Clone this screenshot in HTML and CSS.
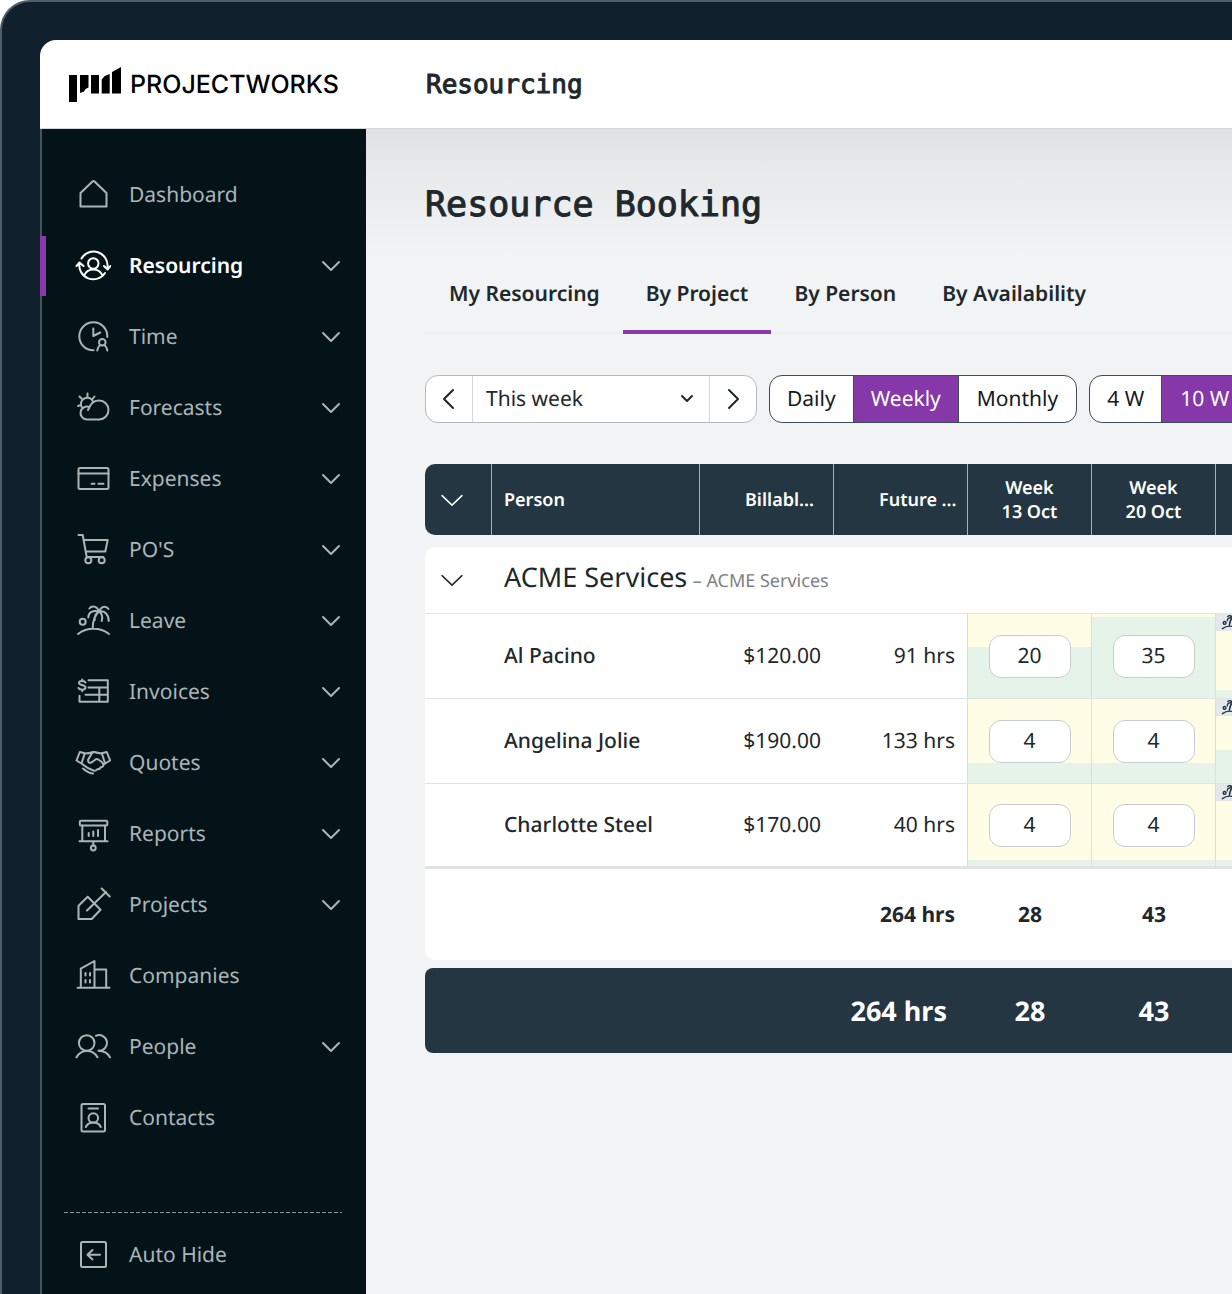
FILE: index.html
```html
<!DOCTYPE html>
<html lang="en">
<head>
  <meta charset="UTF-8">
  <meta name="viewport" content="width=device-width, initial-scale=1.0">
  <title>Resource Booking - Projectworks</title>
  <link rel="stylesheet" href="styles.css">
</head>
<body>
  <svg class="symbols" aria-hidden="true">
    <symbol id="chevron" viewBox="0 0 20 12">
      <path d="M2 2l8 8 8-8"/>
    </symbol>
    <symbol id="chevron-wide" viewBox="0 0 30 18">
      <path d="M1.500 3 15 16 28.500 3"/>
    </symbol>
    <symbol id="palm" viewBox="0 0 36 36">
      <circle cx="7.700" cy="18.800" r="3"/>
      <path d="M3 31c9-7 22-7 31 0M17.700 25c0-7 2-12.500 6.600-17M24.300 8.500C22 3 17 2 14.300 5.500M24.300 8.500C18 7 13.500 9 13.300 14.500M24.300 8.500C26 3 31 2.500 33.500 6M24.300 8.500c5.500-1 9.500 3 9.400 9.500M24.300 8.500c-4 2-5 5-4.500 8.500M24.300 8.500c3 2.500 3.500 6 2.400 9.500"/>
    </symbol>
  </svg>

  <div class="frame">
    <div class="app">
      <header class="topbar">
        <a class="logo" href="#">
          <svg class="logo-mark" viewBox="0 0 52 36" aria-hidden="true">
            <path d="M0 8h8v27H0zM11 8h8.500v12.500l-3 1.500-1.500 2.500-4 1.500zM22 8h8v18.500h-8zM32.700 12.500l3-3.500 5-2v19.500h-8zM43 5l9-5v26.500h-9z"/>
          </svg>
          <span>PROJECTWORKS</span>
        </a>
        <span class="section-name">Resourcing</span>
      </header>

      <div class="layout">
        <nav class="sidebar">
          <ul class="nav-list">
            <li><a class="nav-item" href="#">
              <svg class="icon" viewBox="0 0 36 36"><path d="M5.500 16 17.500 4.500q1-1 2 0L31.500 16v13.500h-26z"/></svg>
              <span>Dashboard</span></a></li>
            <li><a class="nav-item active" href="#">
              <svg class="icon" viewBox="0 0 36 36"><circle cx="18.300" cy="15.500" r="5.200"/><path d="M9.500 27c3-7.500 14.600-7.500 17.600 0M6.500 10.500A14 14 0 0 1 32.500 19M30 25A14 14 0 0 1 4.500 15M1.500 18l3-3.500 4 3.500M29 18l3.500 3.500 3-3.500"/></svg>
              <span>Resourcing</span>
              <svg class="chevron"><use href="#chevron"/></svg></a></li>
            <li><a class="nav-item" href="#">
              <svg class="icon" viewBox="0 0 36 36"><path d="M32.300 18A14 14 0 1 0 18.500 31.300M18.300 9.500v7.500l7-3.500M22.300 31.500q.5-4 3.200-5.500M32.300 31.500q-.5-4-3.200-5.500"/><circle cx="27.300" cy="23.200" r="3.300"/></svg>
              <span>Time</span>
              <svg class="chevron"><use href="#chevron"/></svg></a></li>
            <li><a class="nav-item" href="#">
              <svg class="icon" viewBox="0 0 36 36"><path d="M12 29.500a6.500 6.500 0 1 1 2.500-12.500c2-4.500 5.500-6.500 9.500-6.500a9.500 9.500 0 0 1 0 19zM7 17.500a6.300 6.300 0 1 1 11.200-5.500M12.500 7V3.500M7 9 4.500 6.500M6 15l-3 1M17.500 9l2-2.500M14.500 17l-1.500 3"/></svg>
              <span>Forecasts</span>
              <svg class="chevron"><use href="#chevron"/></svg></a></li>
            <li><a class="nav-item" href="#">
              <svg class="icon" viewBox="0 0 36 36"><rect x="3.500" y="7" width="30" height="21" rx="1.500"/><path d="M3.500 12.500h30M16.500 22.700h3M23.500 22.700h5"/></svg>
              <span>Expenses</span>
              <svg class="chevron"><use href="#chevron"/></svg></a></li>
            <li><a class="nav-item" href="#">
              <svg class="icon" viewBox="0 0 36 36"><path d="M3.500 3h4.200l4 22h16.500M8.700 8h24l-2.400 11.500H10.800"/><circle cx="13.300" cy="28.300" r="3"/><circle cx="26.700" cy="28.300" r="3"/></svg>
              <span>PO'S</span>
              <svg class="chevron"><use href="#chevron"/></svg></a></li>
            <li><a class="nav-item" href="#">
              <svg class="icon"><use href="#palm"/></svg>
              <span>Leave</span>
              <svg class="chevron"><use href="#chevron"/></svg></a></li>
            <li><a class="nav-item" href="#">
              <svg class="icon" viewBox="0 0 36 36"><path d="M13.500 6.300H32.800v21.500H4.500v-6M13.500 13.500h19M10.500 20.800h22.300M24.300 13.500v14.300M10.500 8.500c-1-2-6.500-2-6.500.5s6.500 1.500 6.500 4.500-6 2.500-7 .5M7.200 5.500v1.500M7.200 15.700v1.500"/></svg>
              <span>Invoices</span>
              <svg class="chevron"><use href="#chevron"/></svg></a></li>
            <li><a class="nav-item" href="#">
              <svg class="icon" viewBox="0 0 36 36"><path d="M4.800 7 9.800 8.300 6.500 18.500 1.500 15.500zM31.800 7 26.800 8.300l3.300 10.200 5-3zM9.800 8.500q4 0 8.500-1.500M27 8.500q-4.500-.5-7.500-1.500-1.500 0-2.500 1l-4 7q0 3.500 3.500 2.500l3.300-2.500q1.500-1.500 3.500-.5 3.500 2 5 4.500M6.500 18.500c3.500 3 7 5.500 12 7 2 .5 3 0 3.800-1.200 2 0 3-.8 3.200-2 2 0 3-1.300 2.800-2.500M30.200 18.500l-2 1.300M8 23.500q4.500 4.300 10 5"/></svg>
              <span>Quotes</span>
              <svg class="chevron"><use href="#chevron"/></svg></a></li>
            <li><a class="nav-item" href="#">
              <svg class="icon" viewBox="0 0 36 36"><rect x="4.800" y="4.800" width="27.500" height="4.700" rx="1"/><path d="M7.300 9.500v15.700M30 9.500v15.700M4.500 25.200h28M13.700 17v3M18.300 15.500v4.500M23 14v6M18.300 25.200v4.300"/><circle cx="18.300" cy="32" r="2.400"/></svg>
              <span>Reports</span>
              <svg class="chevron"><use href="#chevron"/></svg></a></li>
            <li><a class="nav-item" href="#">
              <svg class="icon" viewBox="0 0 36 36"><path d="M26.700 1.500l8 8M31 5 12 23.500M3.500 32V18.700l9.200-8.900L25.500 22.700 16.700 32z"/></svg>
              <span>Projects</span>
              <svg class="chevron"><use href="#chevron"/></svg></a></li>
            <li><a class="nav-item" href="#">
              <svg class="icon" viewBox="0 0 36 36"><path d="M2.500 29.700h32M5.800 29.700v-19L19.500 3v26.700M19.500 11.500h11.700v18.200M10.500 15v2.500M15 15v2.500M10.500 22v2.500M15 22v2.500"/></svg>
              <span>Companies</span></a></li>
            <li><a class="nav-item" href="#">
              <svg class="icon" viewBox="0 0 36 36"><circle cx="11.700" cy="14" r="7.800"/><path d="M1.500 28.300c4.500-8.500 16.500-8.500 21 0M21 6.800a7.800 7.800 0 1 1 2.500 14.900q8 0 11.500 6.600"/></svg>
              <span>People</span>
              <svg class="chevron"><use href="#chevron"/></svg></a></li>
            <li><a class="nav-item" href="#">
              <svg class="icon" viewBox="0 0 36 36"><rect x="6.500" y="4" width="23.500" height="27.500" rx="1.500"/><circle cx="18.300" cy="18" r="4.800"/><path d="M13.500 8.500h9.500M10.800 27q2-4.500 7.500-4.500t7.500 4.500"/></svg>
              <span>Contacts</span></a></li>
          </ul>
          <div class="divider"></div>
          <button class="nav-item" type="button">
            <svg class="icon" viewBox="0 0 36 36"><rect x="6" y="5" width="25" height="25" rx="1.500"/><path d="M25 17.700H12.500M17.500 13l-5 4.700 5 4.700"/></svg>
            <span>Auto Hide</span>
          </button>
        </nav>

        <main class="content">
          <h1>Resource Booking</h1>

          <div class="tabs">
            <a class="tab" href="#">My Resourcing</a>
            <a class="tab selected" href="#">By Project</a>
            <a class="tab" href="#">By Person</a>
            <a class="tab" href="#">By Availability</a>
          </div>

          <div class="controls">
            <div class="period">
              <button type="button" aria-label="Previous week"><svg viewBox="0 0 24 24"><path d="M16 3 7 12l9 9"/></svg></button>
              <div class="period-select">
                <select aria-label="Period">
                  <option>This week</option>
                </select>
                <svg viewBox="0 0 14 10"><path d="M2 2l5 5 5-5"/></svg>
              </div>
              <button type="button" aria-label="Next week"><svg viewBox="0 0 24 24"><path d="M8 3l9 9-9 9"/></svg></button>
            </div>
            <div class="segments">
              <button type="button">Daily</button>
              <button type="button" class="selected">Weekly</button>
              <button type="button">Monthly</button>
            </div>
            <div class="segments">
              <button type="button">4 W</button>
              <button type="button" class="selected">10 W</button>
            </div>
          </div>

          <table class="bookings">
            <colgroup>
              <col class="col-toggle">
              <col class="col-person">
              <col class="col-rate">
              <col class="col-future">
              <col class="col-week">
              <col class="col-week">
              <col>
            </colgroup>
            <thead>
              <tr>
                <th><button class="toggle" type="button" aria-label="Collapse all"><svg><use href="#chevron-wide"/></svg></button></th>
                <th>Person</th>
                <th class="short">Billabl...</th>
                <th class="short">Future ...</th>
                <th class="week">Week<br>13 Oct</th>
                <th class="week">Week<br>20 Oct</th>
                <th></th>
              </tr>
            </thead>
            <tbody class="project">
              <tr class="gap"><td colspan="7"></td></tr>
              <tr class="project-row">
                <td><button class="toggle" type="button" aria-label="Collapse project"><svg><use href="#chevron-wide"/></svg></button></td>
                <td colspan="6"><span class="project-name">ACME Services</span> <span class="client">– ACME Services</span></td>
              </tr>
              <tr class="person-row">
                <td></td>
                <td class="person">Al Pacino</td>
                <td class="number">$120.00</td>
                <td class="number">91 hrs</td>
                <td class="hours" style="--fill: 61%"><input type="text" value="20" aria-label="Al Pacino, 13 Oct"></td>
                <td class="hours" style="--fill: 97%"><input type="text" value="35" aria-label="Al Pacino, 20 Oct"></td>
                <td class="hours leave" style="--fill: 10%"><div class="leave-tag"><svg><use href="#palm"/></svg></div></td>
              </tr>
              <tr class="person-row">
                <td></td>
                <td class="person">Angelina Jolie</td>
                <td class="number">$190.00</td>
                <td class="number">133 hrs</td>
                <td class="hours" style="--fill: 24%"><input type="text" value="4" aria-label="Angelina Jolie, 13 Oct"></td>
                <td class="hours" style="--fill: 24%"><input type="text" value="4" aria-label="Angelina Jolie, 20 Oct"></td>
                <td class="hours leave" style="--fill: 39%"><div class="leave-tag"><svg><use href="#palm"/></svg></div></td>
              </tr>
              <tr class="person-row">
                <td></td>
                <td class="person">Charlotte Steel</td>
                <td class="number">$170.00</td>
                <td class="number">40 hrs</td>
                <td class="hours" style="--fill: 7%"><input type="text" value="4" aria-label="Charlotte Steel, 13 Oct"></td>
                <td class="hours" style="--fill: 7%"><input type="text" value="4" aria-label="Charlotte Steel, 20 Oct"></td>
                <td class="hours leave" style="--fill: 7%"><div class="leave-tag"><svg><use href="#palm"/></svg></div></td>
              </tr>
              <tr class="subtotal">
                <td></td>
                <td></td>
                <td></td>
                <td class="number">264 hrs</td>
                <td class="sum">28</td>
                <td class="sum">43</td>
                <td></td>
              </tr>
            </tbody>
            <tfoot>
              <tr class="gap small"><td colspan="7"></td></tr>
              <tr class="total">
                <td></td>
                <td></td>
                <td class="number" colspan="2">264 hrs</td>
                <td class="sum">28</td>
                <td class="sum">43</td>
                <td></td>
              </tr>
            </tfoot>
          </table>
        </main>
      </div>
    </div>
  </div>
</body>
</html>
```
FILE: styles.css
```css
* {
  box-sizing: border-box;
}

body {
  margin: 0;
  background-color: #fff;
  color: #20282c;
  font-family: "Noto Sans", sans-serif;
  font-size: 21px;
  line-height: 28px;
  text-rendering: geometricPrecision;
  overflow: hidden;
}

a {
  color: inherit;
  text-decoration: none;
}

button,
input,
select {
  font: inherit;
  color: inherit;
  text-rendering: inherit;
}

button {
  padding: 0;
  border: none;
  background: none;
  cursor: pointer;
}

svg {
  fill: none;
  stroke: currentColor;
  stroke-width: 2;
  stroke-linecap: round;
  stroke-linejoin: round;
}

.symbols {
  display: none;
}

.frame {
  display: flex;
  min-height: 100vh;
  padding: 38px 0 0 38px;
  border-top: 2px solid #4a5d69;
  border-left: 2px solid #4a5d69;
  border-top-left-radius: 30px;
  background-color: #10202d;
}

.app {
  flex: 1;
  min-width: 0;
  display: flex;
  flex-direction: column;
  border-top-left-radius: 16px;
  overflow: hidden;
}

/* top bar */

.topbar {
  display: flex;
  align-items: center;
  height: 89px;
  padding: 2px 0 0 29px;
  background-color: #fff;
  border-bottom: 1px solid #d4d7d9;
}

.logo {
  display: flex;
  align-items: center;
  gap: 9px;
  width: 357px;
  color: #000;
  font-family: Inter, sans-serif;
  font-size: 25px;
  font-weight: 500;
}

.logo-mark {
  width: 52px;
  height: 36px;
  fill: #000;
  stroke: none;
}

.section-name,
h1 {
  font-family: "DejaVu Sans Mono", monospace;
  -webkit-text-stroke: 1px currentColor;
}

.section-name {
  font-size: 26px;
}

.layout {
  flex: 1;
  display: flex;
}

/* sidebar */

.sidebar {
  flex: none;
  width: 326px;
  padding-top: 36px;
  border-left: 2px solid #46555b;
  background-color: #041318;
  color: #aab5b8;
}

.nav-list {
  display: flex;
  flex-direction: column;
  gap: 11px;
  margin: 0;
  padding: 0;
  list-style: none;
}

.nav-item {
  position: relative;
  display: flex;
  align-items: center;
  gap: 18px;
  width: 100%;
  height: 60px;
  padding: 0 25px 0 33px;
}

.nav-item.active {
  color: #fff;
  font-weight: 600;
}

.nav-item.active::before {
  content: "";
  position: absolute;
  top: 0;
  bottom: 0;
  left: -2px;
  width: 6px;
  background-color: #883aaa;
}

.icon {
  flex: none;
  width: 36px;
  height: 36px;
}

.chevron {
  width: 20px;
  height: 12px;
  margin-left: auto;
  color: #aab5b8;
}

.divider {
  height: 1px;
  margin: 64px 24px 12px 22px;
  background: repeating-linear-gradient(to right, #8d999d 0 4px, transparent 4px 6px);
}

/* content */

.content {
  flex: 1;
  min-width: 0;
  padding: 52px 0 0 59px;
  background: linear-gradient(#dfe0e1, #e8e9eb 40px, #f1f3f5 130px);
}

h1 {
  margin: 0;
  font-size: 35px;
  font-weight: 400;
  line-height: 48px;
}

.tabs {
  display: flex;
  margin-top: 28px;
  padding-left: 1px;
  box-shadow: inset 0 -2px #eceef0;
}

.tab {
  height: 77px;
  padding: 23px 23px 0;
  font-weight: 600;
}

.tab.selected {
  border-bottom: 4px solid #883aaa;
}

.controls {
  display: flex;
  gap: 12px;
  margin-top: 41px;
}

.period,
.segments {
  display: flex;
  flex: none;
  height: 48px;
  border: 1px solid #b4babd;
  border-radius: 13px;
  background-color: #fff;
  overflow: hidden;
}

.period button {
  display: flex;
  align-items: center;
  justify-content: center;
  width: 46px;
}

.period button svg {
  width: 24px;
  height: 24px;
}

.period-select {
  position: relative;
  width: 238px;
  border-left: 1px solid #d5d8da;
  border-right: 1px solid #d5d8da;
}

.period-select select {
  appearance: none;
  width: 100%;
  height: 100%;
  padding: 0 40px 0 13px;
  border: none;
  background: none;
}

.period-select svg {
  position: absolute;
  top: 18px;
  right: 15px;
  width: 14px;
  height: 10px;
  pointer-events: none;
}

.segments {
  border-color: #3c4c55;
  color: #14191c;
}

.segments button {
  padding: 0 17px;
}

.segments button + button {
  border-left: 1px solid #3c4c55;
}

.segments button:last-child {
  padding: 0 18px;
}

.segments .selected {
  background-color: #8637a8;
  color: #fff;
}

/* bookings table */

.bookings {
  width: 100%;
  margin-top: 41px;
  table-layout: fixed;
  border-collapse: separate;
  border-spacing: 0;
}

.bookings th,
.bookings td {
  padding: 0;
}

.col-toggle { width: 67px; }
.col-person { width: 208px; }
.col-rate { width: 134px; }
.col-future { width: 134px; }
.col-week { width: 124px; }

.bookings th {
  height: 71px;
  padding-left: 12px;
  border-right: 1px solid #a7b0b7;
  background-color: #243642;
  color: #fff;
  font-size: 18px;
  font-weight: 600;
  line-height: 24px;
  text-align: left;
}

.bookings th:first-child {
  padding-left: 0;
  border-radius: 10px 0 0 10px;
}

.bookings th.short {
  padding-left: 45px;
  white-space: nowrap;
}

.bookings th.week {
  padding-left: 0;
  text-align: center;
}

.bookings th:last-child {
  border-right: none;
}

.toggle {
  display: block;
  margin-left: 16px;
}

.toggle svg {
  display: block;
  width: 22px;
  height: 14px;
}

.gap td {
  height: 12px;
}

.gap.small td {
  height: 8px;
}

.project tr:not(.gap) td {
  background-color: #fff;
}

.project .project-row td {
  height: 67px;
  border-bottom: 1px solid #e3e6e8;
}

.project-row td:first-child {
  border-top-left-radius: 10px;
}

.bookings .project-row td:last-child {
  padding: 0 0 3px 12px;
}

.project-name {
  font-size: 27px;
}

.client {
  color: #7c8285;
  font-size: 18px;
}

.project .person-row td {
  height: 85px;
  border-bottom: 1px solid #e0e3e4;
}

.project .person-row:nth-last-child(2) td {
  border-bottom: 3px solid #e0e3e4;
}

.bookings .person {
  padding-left: 12px;
  font-weight: 500;
}

.bookings .number {
  padding-right: 13px;
  text-align: right;
}

.person-row td:nth-child(4),
.project .hours {
  border-right: 1px solid #dbe0dd;
}

.bookings .person-row td:nth-child(4) {
  padding-right: 12px;
}

.project .person-row .hours {
  background: linear-gradient(to top, #e6f3e9 var(--fill), #fffde5 0);
  text-align: center;
}

.hours input {
  display: block;
  width: 82px;
  height: 43px;
  margin: 0 auto;
  padding: 0;
  border: 1px solid #c8ccd0;
  border-radius: 12px;
  background-color: #fff;
  text-align: center;
}

.project .leave {
  border-right: none;
  vertical-align: top;
}

.leave-tag {
  height: 17px;
  padding-left: 5px;
  background-color: #e4e7eb;
  color: #243642;
  overflow: hidden;
}

.leave-tag svg {
  display: block;
  width: 17px;
  height: 17px;
  stroke-width: 3;
}

.subtotal td {
  height: 91px;
  font-weight: 700;
}

.subtotal td:first-child {
  border-bottom-left-radius: 10px;
}

.sum {
  text-align: center;
}

.total td {
  height: 85px;
  background-color: #243642;
  color: #fff;
  font-size: 27px;
  font-weight: 700;
}

.bookings .total .number {
  padding-right: 21px;
}

.total td:first-child {
  border-radius: 8px 0 0 8px;
}
```
